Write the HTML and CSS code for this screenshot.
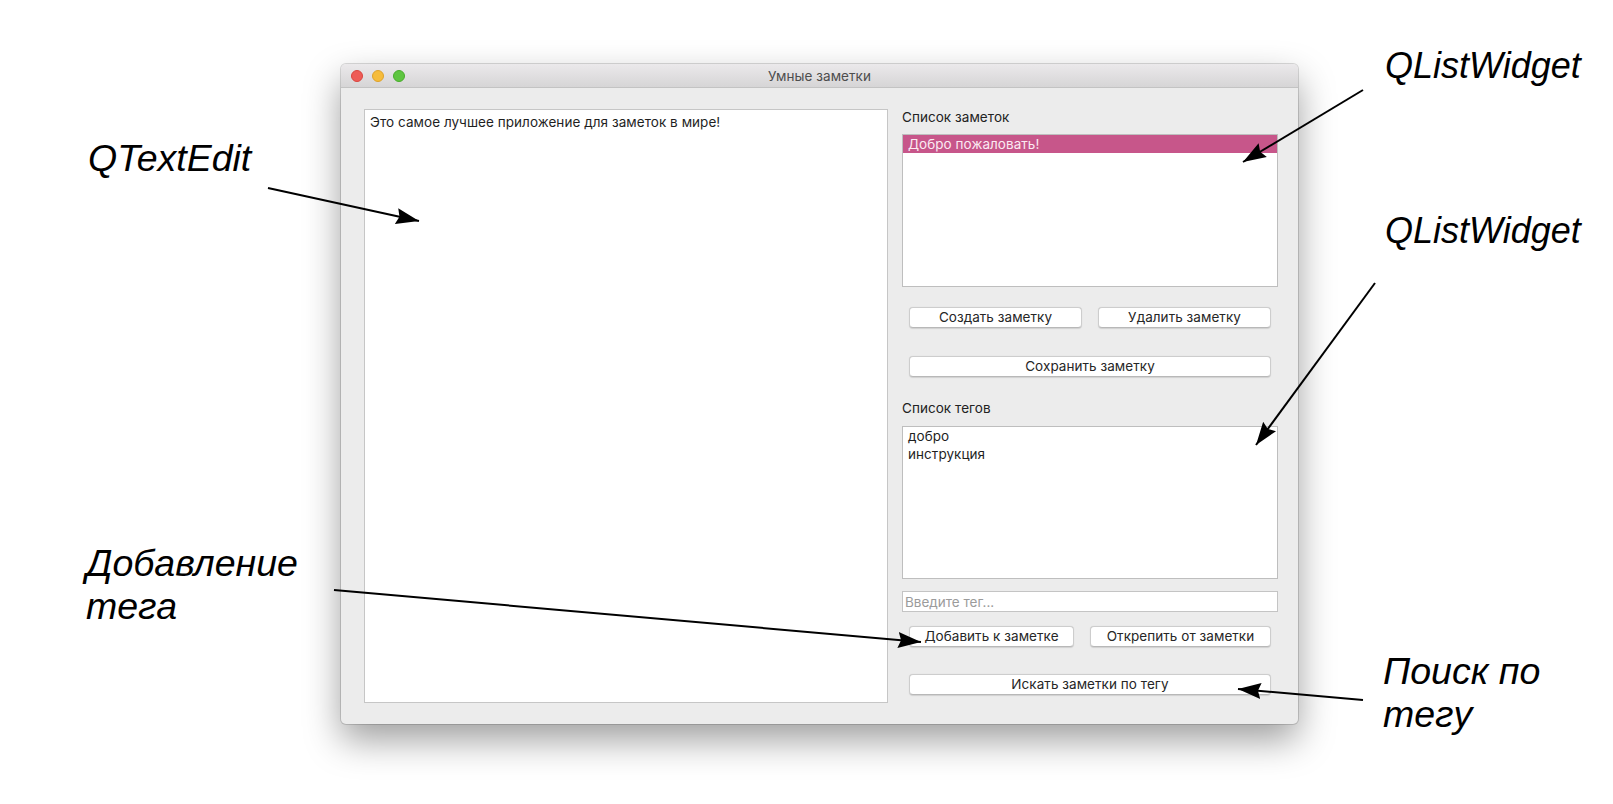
FILE: index.html
```html
<!DOCTYPE html>
<html lang="ru">
<head>
<meta charset="utf-8">
<title>Умные заметки</title>
<link rel="stylesheet" href="styles.css">
</head>
<body>
<div class="stage">
  <div class="window">
    <div class="titlebar">
      <div class="lights">
        <span class="light red"></span>
        <span class="light yellow"></span>
        <span class="light green"></span>
      </div>
      <div class="title">Умные заметки</div>
    </div>
    <div class="content">
      <div class="textedit">Это самое лучшее приложение для заметок в мире!</div>
      <div class="side">
        <div class="label">Список заметок</div>
        <div class="list list-notes">
          <div class="item selected">Добро пожаловать!</div>
        </div>
        <div class="btnrow row1">
          <button class="btn">Создать заметку</button>
          <button class="btn">Удалить заметку</button>
        </div>
        <div class="btnrow row-save">
          <button class="btn">Сохранить заметку</button>
        </div>
        <div class="label label-tags">Список тегов</div>
        <div class="list list-tags">
          <div class="item">добро</div>
          <div class="item">инструкция</div>
        </div>
        <input class="tag-input" type="text" placeholder="Введите тег...">
        <div class="btnrow row2">
          <button class="btn btn-add">Добавить к заметке</button>
          <button class="btn btn-detach">Открепить от заметки</button>
        </div>
        <div class="btnrow row-search">
          <button class="btn">Искать заметки по тегу</button>
        </div>
      </div>
    </div>
  </div>

  <div class="note note-textedit">QTextEdit</div>
  <div class="note note-list1">QListWidget</div>
  <div class="note note-list2">QListWidget</div>
  <div class="note note-add">Добавление<br>тега</div>
  <div class="note note-search">Поиск по<br>тегу</div>

  <svg class="arrows" width="1613" height="804" viewBox="0 0 1613 804">
    <defs>
      <marker id="head" markerUnits="userSpaceOnUse" markerWidth="26" markerHeight="18" refX="23" refY="9" orient="auto">
        <path d="M0,1 L23,9 L0,17 L3,9 z" fill="#000"/>
      </marker>
    </defs>
    <line x1="268" y1="188" x2="419" y2="221" marker-end="url(#head)"/>
    <line x1="1363" y1="90" x2="1243" y2="162" marker-end="url(#head)"/>
    <line x1="1375" y1="283" x2="1256" y2="445" marker-end="url(#head)"/>
    <line x1="334" y1="590" x2="921" y2="642" marker-end="url(#head)"/>
    <line x1="1363" y1="700" x2="1238" y2="689" marker-end="url(#head)"/>
  </svg>
</div>
</body>
</html>
```

FILE: styles.css
```css
html, body {
  margin: 0;
  padding: 0;
  background: #ffffff;
}

.stage {
  position: relative;
  width: 1613px;
  height: 804px;
  padding: 64px 0 0 341px;
  box-sizing: border-box;
  overflow: hidden;
  font-family: Inter, "Liberation Sans", Arial, sans-serif;
}

.window {
  width: 957px;
  height: 660px;
  background: #ececec;
  border-radius: 5px;
  box-shadow: 0 0 0 1px rgba(0, 0, 0, 0.14), 0 16px 36px rgba(0, 0, 0, 0.38);
  overflow: hidden;
  display: flex;
  flex-direction: column;
}

.titlebar {
  position: relative;
  height: 24px;
  box-sizing: border-box;
  background: linear-gradient(#ebe9eb, #d6d5d6);
  border-bottom: 1px solid #c3c3c3;
  display: flex;
  align-items: center;
  justify-content: center;
  flex: 0 0 auto;
}

.lights {
  position: absolute;
  left: 10px;
  top: 6px;
  display: flex;
  gap: 9px;
}

.light {
  width: 12px;
  height: 12px;
  border-radius: 50%;
  box-sizing: border-box;
}

.red { background: #ee5c57; border: 0.5px solid #d9453f; }
.yellow { background: #f6bc3b; border: 0.5px solid #dea22b; }
.green { background: #5ec540; border: 0.5px solid #48ac2c; }

.title {
  font-size: 13.5px;
  color: #4d4d4d;
  letter-spacing: 0.05px;
}

.content {
  flex: 1 1 auto;
  display: grid;
  grid-template-columns: 524px 376px;
  column-gap: 14px;
  padding: 21px 20px 20px 23px;
}

.textedit {
  background: #ffffff;
  border: 1px solid #c6c6c6;
  box-sizing: border-box;
  height: 594px;
  padding: 4px 5px;
  font-size: 13.5px;
  line-height: 16px;
  color: #1f1f1f;
  letter-spacing: 0.05px;
}

.side {
  display: flex;
  flex-direction: column;
}

.label {
  height: 16px;
  line-height: 16px;
  font-size: 13.5px;
  color: #222;
  letter-spacing: 0.05px;
}

.list {
  background: #ffffff;
  border: 1px solid #bebebe;
  box-sizing: border-box;
  height: 153px;
  margin-top: 9px;
}

.item {
  height: 18px;
  line-height: 18px;
  padding-left: 5px;
  font-size: 13.5px;
  color: #1f1f1f;
  letter-spacing: 0.05px;
}

.item.selected {
  background: #c7568a;
  color: #fbeaf2;
}

.btnrow {
  display: flex;
  gap: 16px;
  padding: 0 7px;
}

.row1 { margin-top: 20px; }
.row-save { margin-top: 28px; }
.row2 { margin-top: 14px; }
.row-search { margin-top: 27px; }

.btn {
  flex: 1 1 0;
  height: 21px;
  margin: 0;
  padding: 0;
  background: #ffffff;
  border: 1px solid #cdcdcd;
  border-bottom-color: #b8b8b8;
  border-radius: 4px;
  box-shadow: 0 0.5px 1px rgba(0, 0, 0, 0.12);
  font-family: Inter, "Liberation Sans", Arial, sans-serif;
  font-size: 13.5px;
  color: #262626;
  letter-spacing: 0.05px;
  line-height: 19px;
  text-align: center;
}

.btn-add { flex: 0 0 165px; }
.btn-detach { flex: 1 1 0; }

.label-tags { margin-top: 23px; }
.list-tags { margin-top: 10px; }

.tag-input {
  margin: 12px 0 0 0;
  height: 21px;
  box-sizing: border-box;
  border: 1px solid #c4c4c4;
  background: #ffffff;
  padding: 0 2px;
  font-family: Inter, "Liberation Sans", Arial, sans-serif;
  font-size: 13.5px;
  color: #222;
  outline: none;
}

.tag-input::placeholder {
  color: #9b9b9b;
}

.note {
  position: absolute;
  font-family: "Liberation Sans", Arial, sans-serif;
  font-style: italic;
  font-size: 36px;
  line-height: 43px;
  color: #000;
  white-space: nowrap;
}

.note-textedit { left: 88px; top: 137px; font-size: 37.5px; }
.note-list1 { left: 1385px; top: 44px; }
.note-list2 { left: 1385px; top: 209px; }
.note-add { left: 86px; top: 542px; font-size: 37.5px; }
.note-search { left: 1383px; top: 650px; font-size: 37.5px; }

.arrows {
  position: absolute;
  left: 0;
  top: 0;
  pointer-events: none;
}

.arrows line {
  stroke: #000;
  stroke-width: 2;
}
```
